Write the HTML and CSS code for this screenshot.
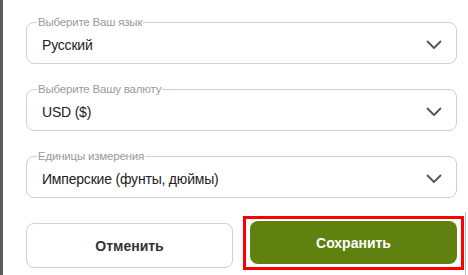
FILE: index.html
```html
<!DOCTYPE html>
<html lang="ru">
<head>
<meta charset="utf-8">
<link rel="stylesheet" href="styles.css">
</head>
<body>
<div class="page">
  <div class="sidebar"></div>
  <div class="panel">
    <fieldset class="field">
      <legend class="legend">Выберите Ваш язык</legend>
      <div class="select"><span class="value">Русский</span>
        <svg class="chev" width="16" height="10" viewBox="0 0 16 10"><path d="M1.5 1.5 L8 8 L14.5 1.5" fill="none" stroke="#555" stroke-width="1.8" stroke-linecap="round" stroke-linejoin="round"/></svg>
      </div>
    </fieldset>
    <fieldset class="field">
      <legend class="legend">Выберите Вашу валюту</legend>
      <div class="select"><span class="value">USD ($)</span>
        <svg class="chev" width="16" height="10" viewBox="0 0 16 10"><path d="M1.5 1.5 L8 8 L14.5 1.5" fill="none" stroke="#555" stroke-width="1.8" stroke-linecap="round" stroke-linejoin="round"/></svg>
      </div>
    </fieldset>
    <fieldset class="field">
      <legend class="legend">Единицы измерения</legend>
      <div class="select"><span class="value">Имперские (фунты, дюймы)</span>
        <svg class="chev" width="16" height="10" viewBox="0 0 16 10"><path d="M1.5 1.5 L8 8 L14.5 1.5" fill="none" stroke="#555" stroke-width="1.8" stroke-linecap="round" stroke-linejoin="round"/></svg>
      </div>
    </fieldset>
    <div class="actions">
      <button class="btn cancel">Отменить</button>
      <div class="focus"><button class="btn save">Сохранить</button></div>
    </div>
  </div>
  <div class="edge"></div>
</div>
</body>
</html>
```

FILE: styles.css
```css
* { box-sizing: border-box; }
html, body { margin: 0; padding: 0; background: #fff; }
body { font-family: "Liberation Sans", Arial, sans-serif; color: #222; }
.page { display: flex; width: 468px; height: 275px; overflow: hidden; position: relative; }
.sidebar { width: 3px; background: #5a5a5a; flex: none; }
.panel { margin-left: 23px; width: 431px; display: flex; flex-direction: column; padding-top: 15px; }
.field { margin: 0 0 18px 0; border: 1px solid #d0d0d0; border-radius: 8px; padding: 0 14px 0 15px; min-width: 0; }
.legend { font-size: 11.5px; letter-spacing: -0.2px; color: #9a9a9a; padding: 0 1px; margin-left: -5px; line-height: 14px; }
.select { display: flex; align-items: center; justify-content: space-between; height: 34px; padding-bottom: 3px; }
.value { font-size: 14px; letter-spacing: -0.2px; color: #222; }
.chev { flex: none; }
.actions { display: flex; justify-content: space-between; align-items: center; margin-top: 5px; }
.btn { font-family: inherit; font-size: 14px; font-weight: 700; height: 45px; border-radius: 8px; cursor: pointer; }
.cancel { width: 207px; background: #fff; border: 1px solid #d0d0d0; color: #333; }
.focus { border: 3px solid #ff0000; padding: 2px 4px 3px 4px; margin-right: -7px; margin-top: -5px; }
.save { display: block; width: 207px; height: 43px; background: #5f810f; border: none; color: #fff; }
.edge { position: absolute; right: 2px; top: 212px; width: 1px; height: 63px; background: #bdbdbd; }
```
